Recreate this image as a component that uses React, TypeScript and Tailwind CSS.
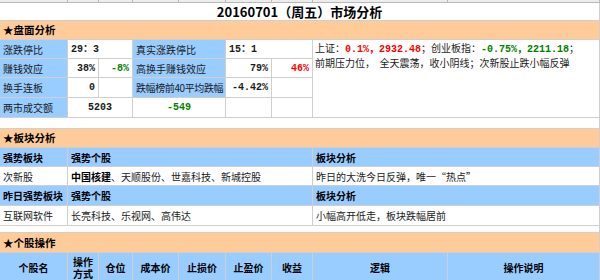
import React from "react";

// spreadsheet-style daily market report
const cjk = "[font-family:'Noto_Sans_CJK_SC','Noto_Sans',sans-serif]";
const num = "[font-family:'Liberation_Mono','Noto_Sans_CJK_SC',monospace] font-bold";
const line = "border-r border-b border-[#cfcfcf]";
const blue = "bg-[#99ccff]";
const orange = "bg-[#ffcc99]";

const Cell: React.FC<{
  className?: string;
  children?: React.ReactNode;
}> = ({ className = "", children }) => (
  <div className={`${line} flex items-center overflow-hidden whitespace-nowrap px-[3px] ${className}`}>
    {children}
  </div>
);

const Section: React.FC<{ title: string }> = ({ title }) => (
  <Cell className={`col-span-9 ${orange} text-[10.5px] font-bold text-black`}>★{title}</Cell>
);

export default function App() {
  return (
    <div className={`w-[600px] h-[280px] overflow-hidden bg-white text-[10px] text-[#1a1a1a] ${cjk}`}>
      <div className="grid grid-cols-[68px_31px_34px_46px_47px_46px_41px_135px_152px] grid-rows-[3px_18px_19px_19px_19px_20px_20px_11px_19px_19px_19px_20px_20px_7px_20px_30px]">
        {/* edge of previous row */}
        {Array.from({ length: 9 }).map((_, i) => (
          <div key={i} className="border-r border-b border-[#b8b8b8] bg-[#ececec]" />
        ))}

        <Cell className="col-span-9 justify-center text-[13px] font-bold text-black">
          20160701（周五）市场分析
        </Cell>

        <Section title="盘面分析" />

        {/* row 1 */}
        <Cell className={blue}>涨跌停比</Cell>
        <Cell className={`col-span-2 ${num}`}>29：3</Cell>
        <Cell className={`col-span-2 ${blue}`}>真实涨跌停比</Cell>
        <Cell className={`col-span-2 ${num}`}>15：1</Cell>
        <div className={`${line} col-span-2 row-span-4 px-[2px] pt-[1px] leading-[13px] whitespace-nowrap`}>
          <div>
            上证：<span className={`${num} text-[#ff0000]`}>0.1%</span>
            <span className="text-[#ff0000] font-bold">，</span>
            <span className={`${num} text-[#ff0000]`}>2932.48</span>；创业板指：
            <span className={`${num} text-[#008000]`}>-0.75%</span>
            <span className="text-[#008000] font-bold">，</span>
            <span className={`${num} text-[#008000]`}>2211.18</span>；
          </div>
          <div>前期压力位，&nbsp;&nbsp;全天震荡，收小阴线；次新股止跌小幅反弹</div>
        </div>

        {/* row 2 */}
        <Cell className={blue}>赚钱效应</Cell>
        <Cell className={`justify-end ${num}`}>38%</Cell>
        <Cell className={`justify-end ${num} text-[#008000]`}>-8%</Cell>
        <Cell className={`col-span-2 ${blue}`}>高换手赚钱效应</Cell>
        <Cell className={`justify-end ${num}`}>79%</Cell>
        <Cell className={`justify-end ${num} text-[#ff0000]`}>46%</Cell>

        {/* row 3 */}
        <Cell className={blue}>换手连板</Cell>
        <Cell className={`justify-end ${num}`}>0</Cell>
        <Cell />
        <Cell className={`col-span-2 ${blue} px-[2px] tracking-[-0.4px]`}>跌幅榜前40平均跌幅</Cell>
        <Cell className={`justify-end ${num}`}>-4.42%</Cell>
        <Cell />

        {/* row 4 */}
        <Cell className={blue}>两市成交额</Cell>
        <Cell className={`col-span-2 justify-center ${num}`}>5203</Cell>
        <Cell className={`col-span-2 justify-center ${num} text-[#008000]`}>-549</Cell>
        <Cell />
        <Cell />

        <Cell className="col-span-9" />

        <Section title="板块分析" />

        <Cell className={`${blue} font-bold text-black`}>强势板块</Cell>
        <Cell className={`col-span-6 ${blue} font-bold text-black`}>强势个股</Cell>
        <Cell className={`col-span-2 ${blue} font-bold text-black`}>板块分析</Cell>

        <Cell>次新股</Cell>
        <Cell className="col-span-6">
          <span className="font-bold text-black">中国核建</span>、天顺股份、世嘉科技、新城控股
        </Cell>
        <Cell className="col-span-2">昨日的大洗今日反弹，唯一“热点”</Cell>

        <Cell className={`${blue} font-bold text-black`}>昨日强势板块</Cell>
        <Cell className={`col-span-6 ${blue} font-bold text-black`}>强势个股</Cell>
        <Cell className={`col-span-2 ${blue} font-bold text-black`}>板块分析</Cell>

        <Cell>互联网软件</Cell>
        <Cell className="col-span-6">长亮科技、乐视网、高伟达</Cell>
        <Cell className="col-span-2">小幅高开低走，板块跌幅居前</Cell>

        <Cell className="col-span-9" />

        <Section title="个股操作" />

        {["个股名", "操作\n方式", "仓位", "成本价", "止损价", "止盈价", "收益", "逻辑", "操作说明"].map((h) => (
          <Cell
            key={h}
            className={`${blue} justify-center text-center whitespace-pre-line leading-[12px] font-bold text-black`}
          >
            {h}
          </Cell>
        ))}
      </div>
    </div>
  );
}
